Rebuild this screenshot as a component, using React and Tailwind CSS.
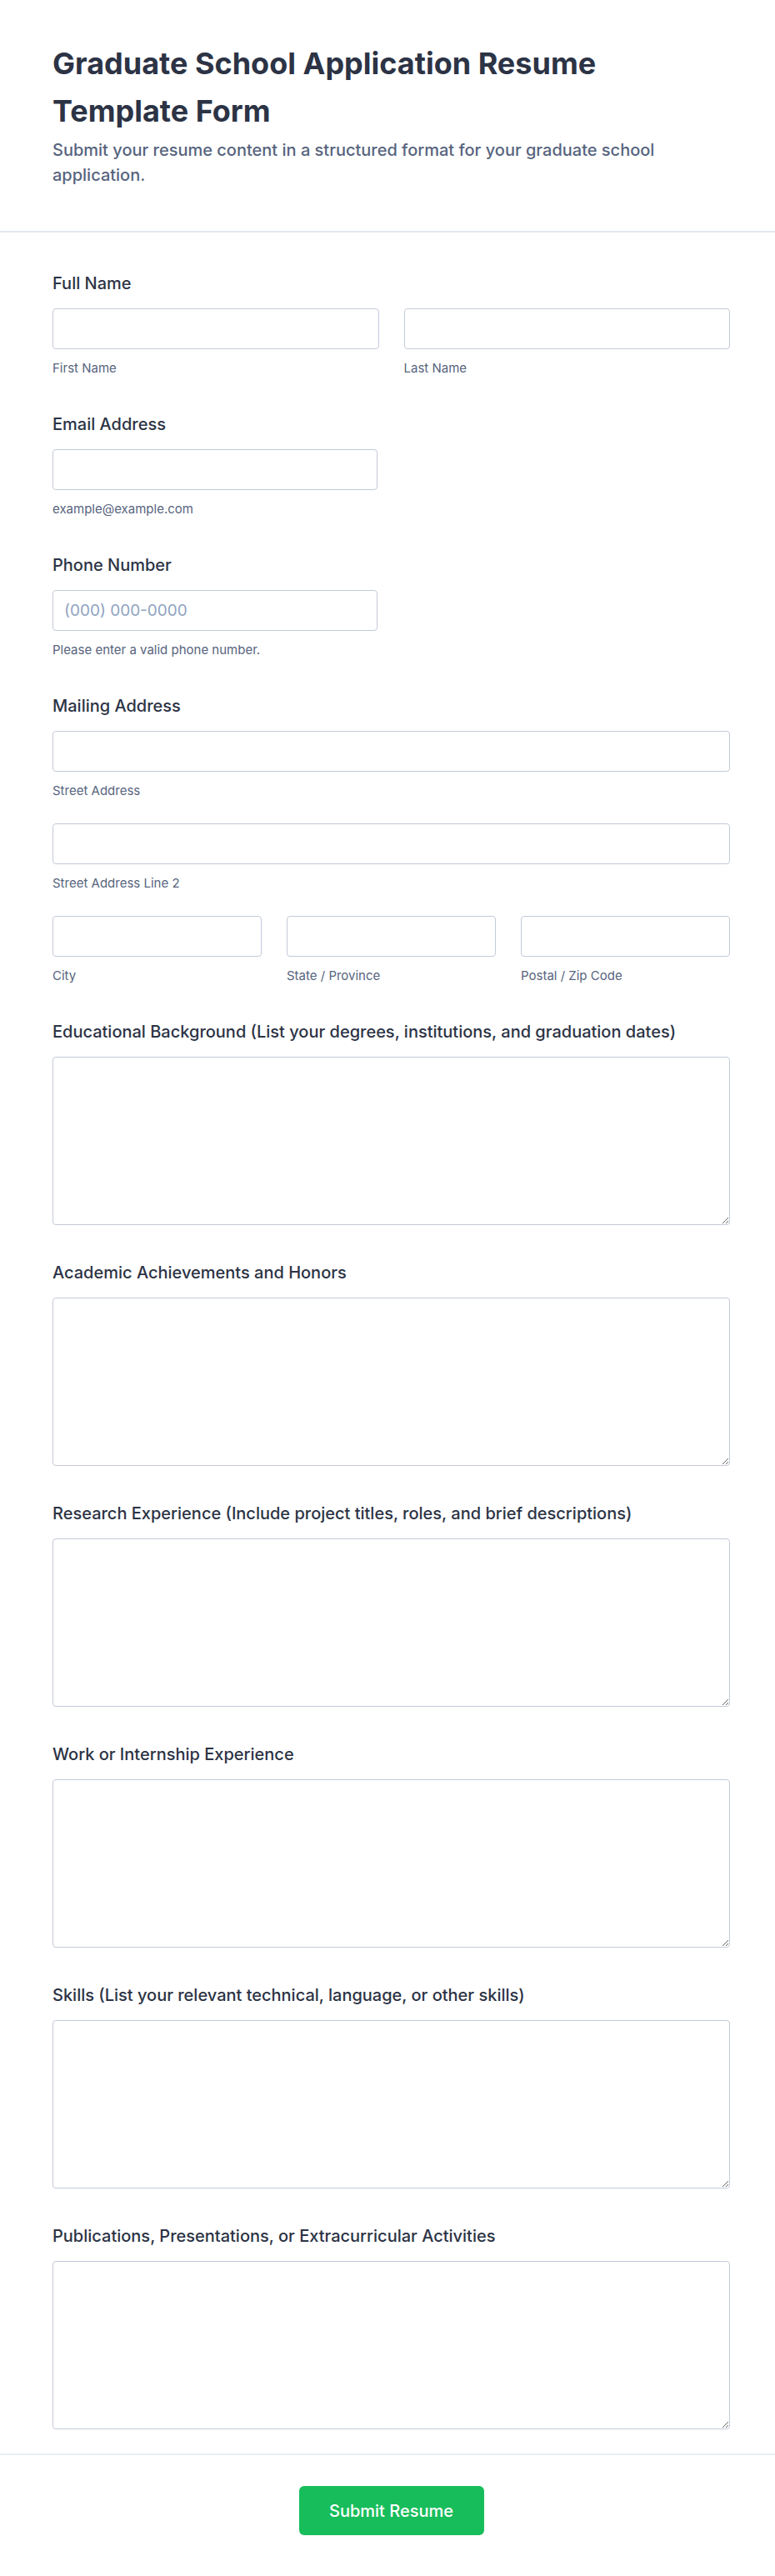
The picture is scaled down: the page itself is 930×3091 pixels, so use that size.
import React from "react";

const labelCls = "block text-[20px] leading-[28px] font-medium text-[#2c3345] mb-4";
const inputCls = "block w-full h-[49px] rounded-[4px] border border-[#c3cad8] bg-white px-[13px] text-[19px] text-[#2c3345] placeholder:text-[#8fa3bf] outline-none";
const subCls = "block mt-[13px] text-[15px] leading-5 text-[#57647e]";

function Sub({ children }) {
  return <span className={subCls}>{children}</span>;
}

function TextAreaField({ label }) {
  return (
    <div>
      <label className={labelCls}>{label}</label>
      <textarea className="block w-full h-[202px] rounded-[4px] border border-[#c3cad8] bg-white px-[13px] py-[10px] text-[19px] outline-none"></textarea>
    </div>
  );
}

export default function App() {
  return (
    <div className="w-full min-h-[3091px] bg-white font-['Inter',sans-serif]">
      <header className="pl-[63px] pr-[54px] pt-[48px] pb-[52px] border-b-2 border-[#e3e7ee]">
        <h1 className="text-[36px] leading-[57px] font-bold text-[#2c3345] max-w-[813px]">
          Graduate School Application Resume Template Form
        </h1>
        <p className="mt-[3px] text-[20px] leading-[30px] font-medium text-[#57647e] max-w-[813px]">
          Submit your resume content in a structured format for your graduate school application.
        </p>
      </header>

      <main className="pl-[63px] pt-[47px] pb-[29px]">
        <div className="w-[813px] flex flex-col gap-[43px]">
          <div>
            <label className={labelCls}>Full Name</label>
            <div className="grid grid-cols-2 gap-[30px]">
              <div>
                <input className={inputCls} />
                <Sub>First Name</Sub>
              </div>
              <div>
                <input className={inputCls} />
                <Sub>Last Name</Sub>
              </div>
            </div>
          </div>

          <div>
            <label className={labelCls}>Email Address</label>
            <div className="w-[390px]">
              <input className={inputCls} />
              <Sub>example@example.com</Sub>
            </div>
          </div>

          <div>
            <label className={labelCls}>Phone Number</label>
            <div className="w-[390px]">
              <input className={inputCls} placeholder="(000) 000-0000" />
              <Sub>Please enter a valid phone number.</Sub>
            </div>
          </div>

          <div>
            <label className={labelCls}>Mailing Address</label>
            <div className="flex flex-col gap-[29px]">
              <div>
                <input className={inputCls} />
                <Sub>Street Address</Sub>
              </div>
              <div>
                <input className={inputCls} />
                <Sub>Street Address Line 2</Sub>
              </div>
              <div className="grid grid-cols-3 gap-[30px]">
                <div>
                  <input className={inputCls} />
                  <Sub>City</Sub>
                </div>
                <div>
                  <input className={inputCls} />
                  <Sub>State / Province</Sub>
                </div>
                <div>
                  <input className={inputCls} />
                  <Sub>Postal / Zip Code</Sub>
                </div>
              </div>
            </div>
          </div>

          <TextAreaField label="Educational Background (List your degrees, institutions, and graduation dates)" />
          <TextAreaField label="Academic Achievements and Honors" />
          <TextAreaField label="Research Experience (Include project titles, roles, and brief descriptions)" />
          <TextAreaField label="Work or Internship Experience" />
          <TextAreaField label="Skills (List your relevant technical, language, or other skills)" />
          <TextAreaField label="Publications, Presentations, or Extracurricular Activities" />
        </div>
      </main>

      <footer className="border-t-2 border-[#eaeef3] pl-[63px] pt-[37px] pb-[49px]">
        <div className="w-[813px] flex justify-center">
          <button className="w-[222px] h-[59px] rounded-[6px] bg-[#18bd5b] text-white text-[20px] font-medium">
            Submit Resume
          </button>
        </div>
      </footer>
    </div>
  );
}
